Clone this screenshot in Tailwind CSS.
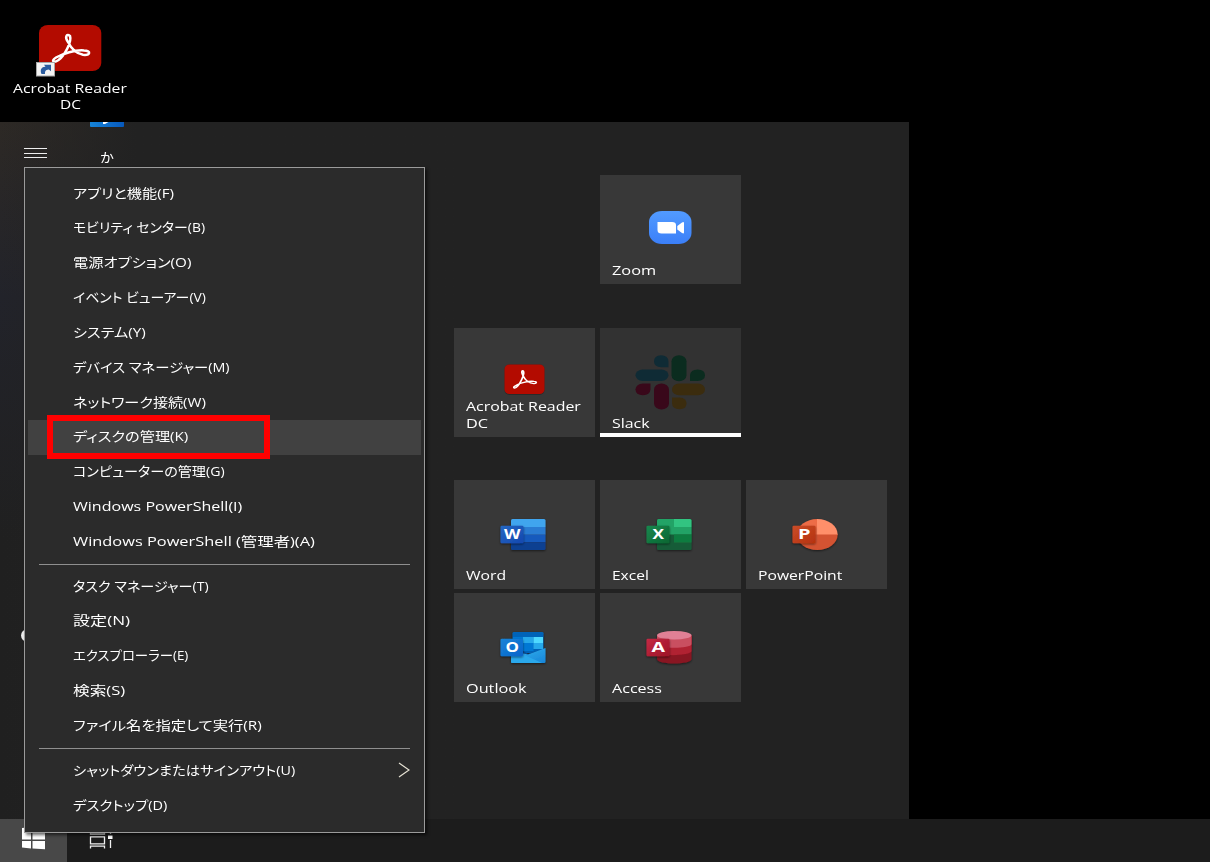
<!DOCTYPE html>
<html lang="ja">
<head>
<meta charset="utf-8">
<title>Start</title>
<script src="https://cdn.jsdelivr.net/npm/@tailwindcss/browser@4"></script>
</head>
<body class="bg-black text-white overflow-hidden font-['Open_Sans','Noto_Sans_CJK_JP',sans-serif]">
<main class="relative w-[1210px] h-[862px] bg-black flex flex-col overflow-hidden">

  <!-- desktop -->
  <header class="h-[122px] shrink-0 pt-[25px] pl-[10px]">
    <div class="w-[120px] flex flex-col items-center">
      <svg class="w-[66px] h-[52px] shrink-0 mr-[2px]" viewBox="36 25 66 52">
        <rect x="39" y="25" width="62.300" height="46" rx="9" ry="8" fill="#b30b00"/>
        <path d="M70 36C66.500 33.300 64.500 37 68 42C71 48 75 53.300 83 54.800C90.500 55.500 91.500 50.800 84 50.400C75 49.700 63 53.500 56 57.500C50.500 61 53.500 63.500 58.500 60C64.500 55.500 72 42 70 36Z" fill="none" stroke="#fff" stroke-width="2.500"/>
        <rect x="36.500" y="62.500" width="18" height="13.500" fill="#f4f4f4" stroke="#a7a7a7"/>
        <path d="M41.500 74C39.500 69.500 42 66.500 45.500 66.800L44 64.800H51V71.300L48.800 69.500C45 69.800 45 72 45 74Z" fill="#2b5c9f"/>
      </svg>
      <div class="mt-[3px] h-4 w-[114px] text-[12.500px] leading-[17px]"><span data-fit="113.500" class="inline-block origin-left whitespace-nowrap">Acrobat Reader</span></div>
      <div class="h-4 w-[21px] text-[12.500px] leading-[17px]"><span data-fit="21" class="inline-block origin-left whitespace-nowrap">DC</span></div>
    </div>
  </header>

  <!-- start menu -->
  <section class="relative h-[697px] w-[909px] shrink-0 bg-[#222222] flex">
    <div class="w-[454px] shrink-0 bg-linear-to-b from-[#2d2925] via-[#22232a] via-25% to-[#202020] to-60%">
      <div class="h-full w-full bg-linear-to-r from-transparent to-[#222222] to-30%">
        <div class="pl-[90px] h-[17px]"><svg class="w-[34px] h-[6px] block" viewBox="0 0 34 6"><defs><linearGradient id="tip"><stop stop-color="#1684d8"/><stop offset="1" stop-color="#0759bd"/></linearGradient></defs><path d="M0 0H34V4Q34 5 33 5H1Q0 5 0 4Z" fill="url(#tip)"/><path d="M13 0H18.500L15 2H13Z" fill="#fff"/></svg></div>
        <div class="flex items-start pl-[24px] gap-[53px]">
          <div class="w-[23px] h-[10px] mt-[9px] flex flex-col justify-between"><i class="block h-px bg-[#eee]"></i><i class="block h-px bg-[#eee]"></i><i class="block h-px bg-[#eee]"></i></div>
          <div class="w-[14px] text-[13px] leading-6 pt-[6px]"><span data-fit="14" class="inline-block origin-left whitespace-nowrap">か</span></div>
        </div>
      </div>
    </div>
    <div class="pt-[53px] flex flex-col">
      <div class="flex pl-[146px]">
        <div class="w-[140.500px] h-[109px] bg-[#383838] flex flex-col">
          <svg class="w-full h-[87px] shrink-0" viewBox="0 0 140.500 87"><defs><linearGradient id="zm" x2="0" y2="1"><stop stop-color="#529bff"/><stop offset="1" stop-color="#3b7ff8"/></linearGradient></defs><rect x="49" y="36" width="42.500" height="33" rx="13" ry="11" fill="url(#zm)"/><path d="M57.500 47H72Q76 47 76 50V58.500H61.500Q57.500 58.500 57.500 55ZM77.300 51L82 47.500Q84 46.500 84 48V57.500Q84 59 82 58L77.300 54.500Z" fill="#fff"/></svg>
          <div class="pl-[11.500px] text-[13px] leading-[17px]"><span data-fit="44" class="inline-block origin-left whitespace-nowrap">Zoom</span></div>
        </div>
      </div>
      <div class="flex gap-[5.500px] mt-[44px]">
        <div class="w-[140.500px] h-[108.500px] bg-[#383838] flex flex-col">
          <svg class="w-full h-[70px] shrink-0" viewBox="0 0 140.500 70"><rect x="50.500" y="36.500" width="40" height="30.500" rx="5" fill="#222" opacity=".6"/><rect x="50.500" y="36.500" width="40" height="29.500" rx="5" ry="4.500" fill="#b30b00"/><g transform="translate(58.500 42) scale(1.020 .78)"><path d="M11 4C11 1.500 10.600.900 9.900.900C8.500 1.200 9.200 4.500 10.300 7.500C12 12 15 17 21 17.400C24 17.500 24.200 14.800 21 14.500C15 13.800 5 17 1.500 21.500C.500 23.800 3 24 5 20.800C8 16 10.800 8 11 4Z" fill="none" stroke="#fff" stroke-width="1.700"/></g></svg>
          <div class="pl-[11.500px] text-[13px] leading-[17px]"><span data-fit="115" class="inline-block origin-left whitespace-nowrap">Acrobat Reader</span></div>
          <div class="pl-[11.500px] text-[13px] leading-[17px]"><span data-fit="22.500" class="inline-block origin-left whitespace-nowrap">DC</span></div>
        </div>
        <div class="w-[140.500px] h-[108.500px] bg-[#323232] border-b-4 border-white flex flex-col">
          <svg class="w-full h-[87px] shrink-0" viewBox="0 0 140.500 87">
            <g fill="#0f2b35"><path d="M68.500 39.300H61Q54 38.500 54 33.200Q54 27.500 61 27.200Q68.500 27.500 68.500 33.500Z"/><rect x="35.500" y="41.500" width="33" height="11.500" rx="7" ry="5.700"/></g>
            <g fill="#0b2c1f"><rect x="71.500" y="27.200" width="15" height="26" rx="7.500" ry="6"/><path d="M90 53V47Q90.500 41.700 97.500 41.500Q105 41.700 105 47.200Q105 52.500 97.500 53Z"/></g>
            <g fill="#39081a"><path d="M50.500 55.500V61.500Q50 67 43 67.200Q35.500 67 35.500 61.200Q36 56 43 55.500Z"/><rect x="54" y="55.500" width="15" height="26" rx="7.500" ry="6"/></g>
            <g fill="#3b2c0e"><rect x="72" y="55.500" width="33" height="11.700" rx="7" ry="5.800"/><path d="M72 69.500H79.500Q86.500 70 86.500 75.200Q86.500 81 79.500 81.300Q72 81 72 75Z"/></g>
          </svg>
          <div class="pl-[11.500px] text-[13px] leading-[17px]"><span data-fit="38" class="inline-block origin-left whitespace-nowrap">Slack</span></div>
        </div>
      </div>
      <div class="grid grid-cols-[140.500px_140.500px_140.500px] gap-x-[5.500px] gap-y-[4.500px] mt-[43.500px]">
        <div class="h-[108.700px] bg-[#383838] flex flex-col">
          <svg class="w-full h-[87px] shrink-0" viewBox="0 0 140.500 87"><defs><filter id="sh" x="-20%" y="-20%" width="140%" height="150%"><feDropShadow dx="0" dy="1" stdDeviation="1.200" flood-opacity=".55"/></filter><linearGradient id="wd" x2="1" y2="1"><stop stop-color="#2368c4"/><stop offset="1" stop-color="#1547ae"/></linearGradient><clipPath id="sq"><rect x="57" y="39" width="34.500" height="31" rx="1.500"/></clipPath></defs>
            <g filter="url(#sh)"><g clip-path="url(#sq)"><path fill="#41a5ee" d="M57 39h35v8H57z"/><path fill="#2b7cd3" d="M57 47h35v7.700H57z"/><path fill="#185abd" d="M57 54.700h35v7.600H57z"/><path fill="#103f91" d="M57 62.300h35V70H57z"/></g></g>
            <rect x="46.500" y="45.700" width="23" height="17.600" rx="1.300" fill="url(#wd)" filter="url(#sh)"/><text x="50" y="58.800" font-size="13.500" font-weight="700" font-family="Open Sans" textLength="16.500" lengthAdjust="spacingAndGlyphs" fill="#fff">W</text></svg>
          <div class="pl-[11.500px] text-[13px] leading-[17px]"><span data-fit="40" class="inline-block origin-left whitespace-nowrap">Word</span></div>
        </div>
        <div class="h-[108.700px] bg-[#383838] flex flex-col">
          <svg class="w-full h-[87px] shrink-0" viewBox="0 0 140.500 87"><defs><linearGradient id="xl" x2="1" y2="1"><stop stop-color="#18884f"/><stop offset="1" stop-color="#0b6631"/></linearGradient></defs>
            <g filter="url(#sh)"><g clip-path="url(#sq)"><path fill="#185c37" d="M57 39h35v31H57z"/><path fill="#21a366" d="M57 39h17v15.500H57zM74 47h18v7.500H74z"/><path fill="#33c481" d="M74 39h18v8H74z"/><path fill="#107c41" d="M74 54.500h18v8H74z"/></g></g>
            <rect x="46.500" y="45.700" width="23" height="17.600" rx="1.300" fill="url(#xl)" filter="url(#sh)"/><text x="52.500" y="58.800" font-size="13.500" font-weight="700" font-family="Open Sans" textLength="11.500" lengthAdjust="spacingAndGlyphs" fill="#fff">X</text></svg>
          <div class="pl-[11.500px] text-[13px] leading-[17px]"><span data-fit="37" class="inline-block origin-left whitespace-nowrap">Excel</span></div>
        </div>
        <div class="h-[108.700px] bg-[#383838] flex flex-col">
          <svg class="w-full h-[87px] shrink-0" viewBox="0 0 140.500 87"><defs><linearGradient id="pp" x2="1" y2="1"><stop stop-color="#ca4c28"/><stop offset="1" stop-color="#b5320f"/></linearGradient><clipPath id="el"><ellipse cx="71.300" cy="54.500" rx="20.300" ry="15.500"/></clipPath></defs>
            <g filter="url(#sh)"><g clip-path="url(#el)"><path fill="#ed6c47" d="M50 39h21.500v16H50z"/><path fill="#ff8f6b" d="M71 39h21v16H71z"/><path fill="#d35230" d="M50 54.500h42V70H50z"/></g></g>
            <rect x="46.500" y="45.700" width="23" height="17.600" rx="1.300" fill="url(#pp)" filter="url(#sh)"/><text x="52" y="58.800" font-size="13.500" font-weight="700" font-family="Open Sans" textLength="12.500" lengthAdjust="spacingAndGlyphs" fill="#fff">P</text></svg>
          <div class="pl-[11.500px] text-[13px] leading-[17px]"><span data-fit="84.500" class="inline-block origin-left whitespace-nowrap">PowerPoint</span></div>
        </div>
        <div class="h-[108.700px] bg-[#383838] flex flex-col">
          <svg class="w-full h-[87px] shrink-0" viewBox="0 0 140.500 87"><defs><linearGradient id="ol" x2="1" y2="1"><stop stop-color="#1784d8"/><stop offset="1" stop-color="#0a63c9"/></linearGradient><linearGradient id="en" x2="1" y2="1"><stop stop-color="#35b8f1"/><stop offset="1" stop-color="#1784d8"/></linearGradient></defs>
            <g filter="url(#sh)"><path fill="#0364b8" d="M60 39h28q1.500 0 1.500 1.300V60H58.500V40.300Q58.500 39 60 39z"/><path fill="#0078d4" d="M59 44h11v12H59z"/><path fill="#28a8ea" d="M69 44h10.500v6H69z"/><path fill="#50d9ff" d="M79.500 44h9.500v6h-9.500z"/><path fill="#0078d4" d="M69 50h10.500v8H69z"/><path fill="#28a8ea" d="M79.500 50h9.500v6h-9.500z"/><path fill="#0a4b91" d="M66 56L74 61L89 56L91 55L75 63L66 60z"/><path fill="url(#en)" d="M91.500 55V68.700Q91.500 70 90 70H58.500Q57 70 57 68.700V58L74 61.500z"/><path fill="#2ba8eb" d="M57 56L88 70H58.500Q57 70 57 68.700z"/></g>
            <rect x="46.500" y="45.700" width="22.500" height="17.600" rx="1.300" fill="url(#ol)" filter="url(#sh)"/><text x="51.500" y="59" font-size="13.500" font-weight="700" font-family="Open Sans" textLength="13.500" lengthAdjust="spacingAndGlyphs" fill="#fff">O</text></svg>
          <div class="pl-[11.500px] text-[13px] leading-[17px]"><span data-fit="60" class="inline-block origin-left whitespace-nowrap">Outlook</span></div>
        </div>
        <div class="h-[108.700px] bg-[#383838] flex flex-col">
          <svg class="w-full h-[87px] shrink-0" viewBox="0 0 140.500 87"><defs><linearGradient id="ac" x2="1" y2="1"><stop stop-color="#c42a45"/><stop offset="1" stop-color="#9d1426"/></linearGradient></defs>
            <g filter="url(#sh)"><path fill="#881421" d="M57 42.500V66C57 72 91.500 72 91.500 66V42.500z"/><path fill="#b02030" d="M57 42.500V58C57 64 91.500 63 91.500 58V42.500z"/><path fill="#c94f60" d="M57 42.500V51C57 56 91.500 56 91.500 51V42.500z"/><ellipse cx="74.250" cy="42.300" rx="17.250" ry="4.300" fill="#e08095"/></g>
            <rect x="46.500" y="45.700" width="23" height="17.600" rx="1.300" fill="url(#ac)" filter="url(#sh)"/><text x="51.500" y="58.800" font-size="13.500" font-weight="700" font-family="Open Sans" textLength="13.500" lengthAdjust="spacingAndGlyphs" fill="#fff">A</text></svg>
          <div class="pl-[11.500px] text-[13px] leading-[17px]"><span data-fit="49.500" class="inline-block origin-left whitespace-nowrap">Access</span></div>
        </div>
      </div>
    </div>
    <i class="absolute left-[21px] top-[507px] w-4 h-[13px] rounded-full bg-[#eee]"></i>
  </section>

  <!-- taskbar -->
  <footer class="h-[43px] w-full bg-[#1c1c1c] flex">
    <div class="w-[67px] bg-[#484848] pl-[22px]"><svg class="w-[24px] h-[32px] block" viewBox="22 819 24 32" fill="#fff"><path d="M22 828L31 827V839.500H22zM32.500 827L45 826V839.500H32.500zM22 840.900H31V848.600L22 847.600zM32.500 840.900H45V849.300L32.500 848.500z"/></svg></div>
    <svg class="w-[24px] h-[32px] ml-[22px]" viewBox="89 819 24 32" fill="none" stroke="#f0f0f0" stroke-width="1.300"><path d="M90.500 830V834H104.500V830M90.500 836.800H104.500V843.800H90.500zM90.500 848.500V846.200H104.500V848.500M110.500 829V834M110.500 840V848"/><path d="M108 835.500h4.500v3.500H108z" fill="#fff" stroke="none"/></svg>
  </footer>

  <!-- power-user menu -->
  <nav class="absolute left-[24px] top-[167px] w-[401px] h-[665.500px] border border-[#9b9b9b] bg-[#2b2b2b] pt-[8px] px-[3px] shadow-[2px_2px_3px_rgba(0,0,0,0.6)] text-[13px]">
    <ul id="menu" class="flex flex-col"></ul>
  </nav>
  <div class="absolute left-[47px] top-[415px] w-[223px] h-[44px] border-6 border-[#ff0000]"></div>
</main>
<script>
const items = [
  ['アプリと機能(F)',101.5],['モビリティ センター(B)',132.5],['電源オプション(O)',118.5],['イベント ビューアー(V)',132.5],
  ['システム(Y)',72.5],['デバイス マネージャー(M)',156.5],['ネットワーク接続(W)',132.5],['ディスクの管理(K)',115.5],
  ['コンピューターの管理(G)',152],['Windows PowerShell(I)',169],['Windows PowerShell (管理者)(A)',242],null,
  ['タスク マネージャー(T)',135.5],['設定(N)',56.5],['エクスプローラー(E)',115.5],['検索(S)',52.5],['ファイル名を指定して実行(R)',188.5],null,
  ['シャットダウンまたはサインアウト(U)',222.5],['デスクトップ(D)',94.5]
];
document.getElementById('menu').innerHTML = items.map((it, i) => it === null
  ? '<li class="h-[9.900px] ml-[11px] mr-[11px] flex items-center"><i class="block w-full h-px bg-[#8f8f8f]"></i></li>'
  : `<li class="h-[34.830px] pl-[45px] pr-[11px] flex items-center justify-between ${i === 7 ? 'bg-[#414141]' : ''}"><span data-fit="${it[1]}" class="inline-block origin-left whitespace-nowrap [font-feature-settings:'palt']">${it[0]}</span>${i === 18 ? '<svg class="w-[12px] h-[16px] shrink-0" viewBox="0 0 12 16" fill="none" stroke="#e6e2d4" stroke-width="1.200"><path d="M1 1L11 8L1 15"/></svg>' : ''}</li>`).join('');
const fit = el => { if (el.offsetWidth) el.style.transform = `scaleX(${el.dataset.fit / el.offsetWidth})`; };
const labels = [...document.querySelectorAll('[data-fit]')];
const watcher = new ResizeObserver(entries => entries.forEach(e => fit(e.target)));
labels.forEach(el => { fit(el); watcher.observe(el); });
addEventListener('load', () => labels.forEach(fit));
</script>
</body>
</html>
